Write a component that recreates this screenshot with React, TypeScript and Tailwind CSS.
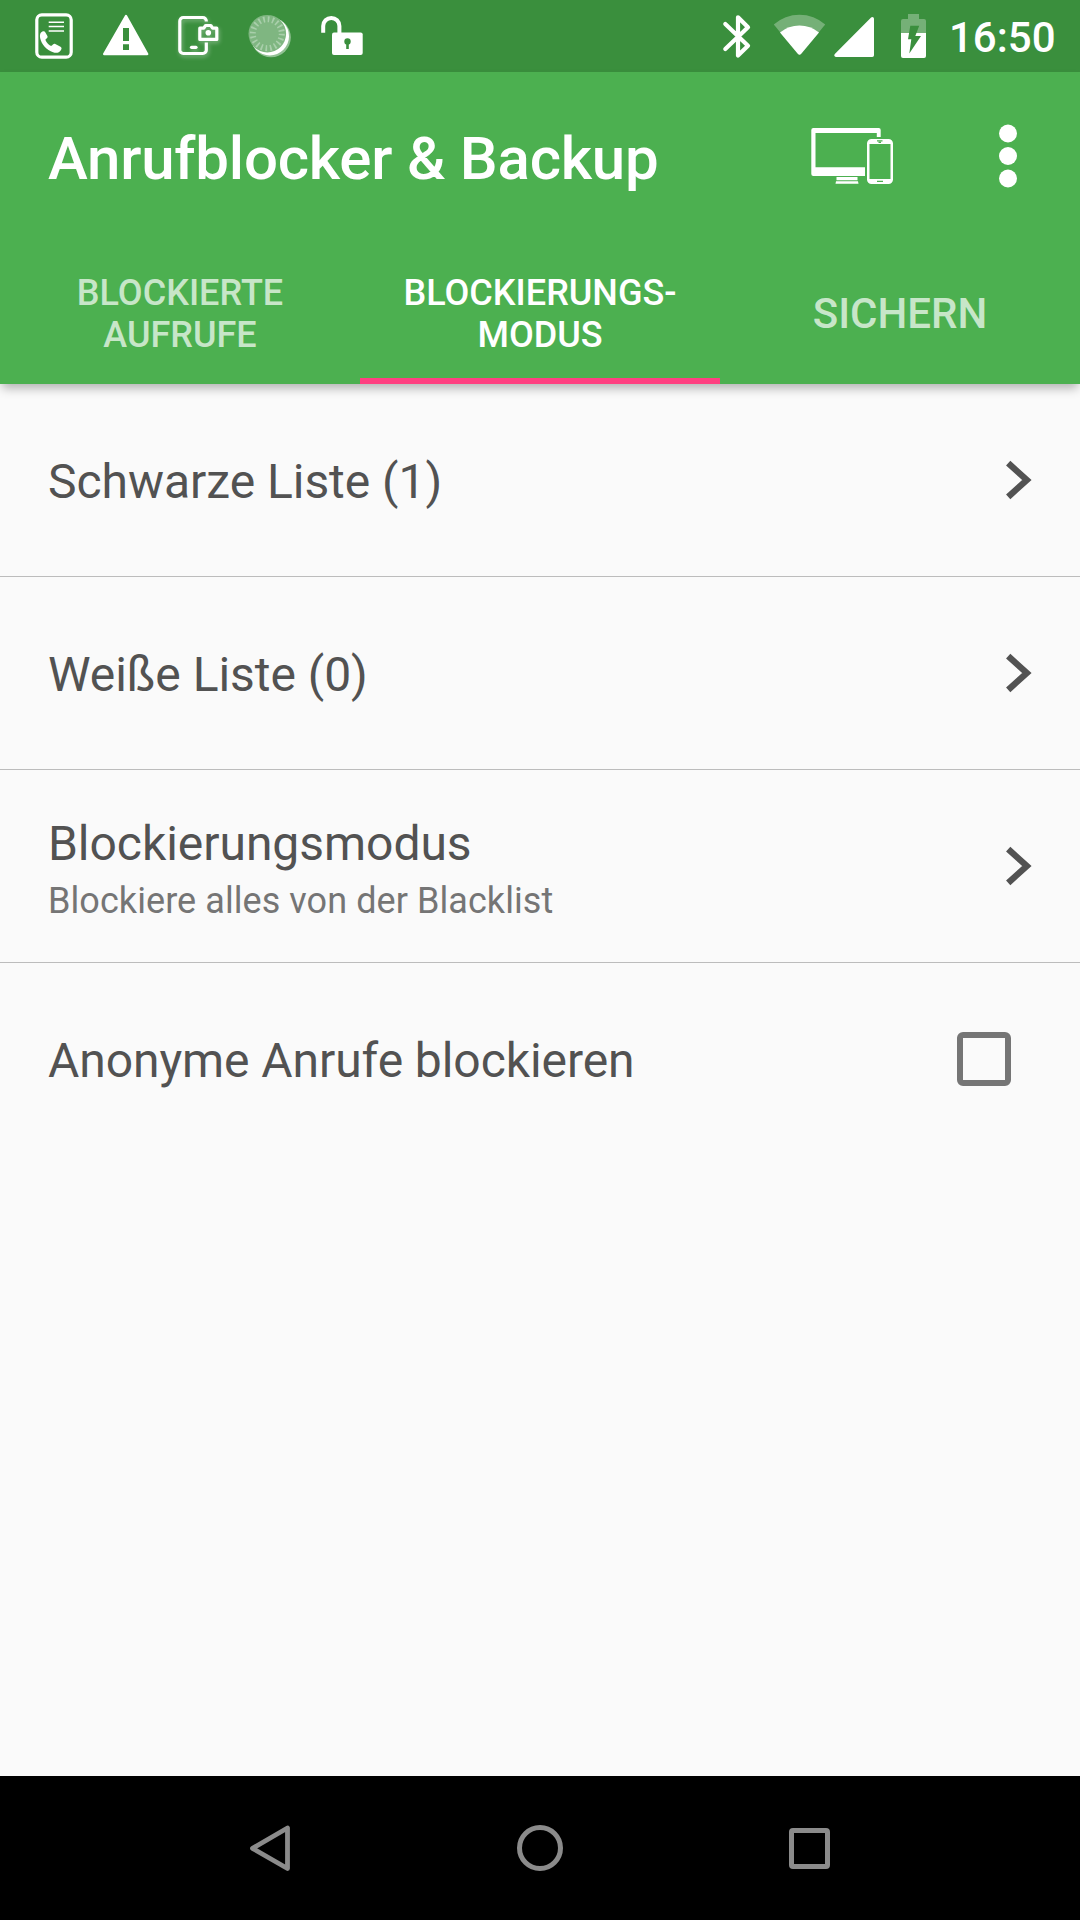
import React from "react";

type Tab = { lines: string[]; active?: boolean; large?: boolean };

const TABS: Tab[] = [
  { lines: ["BLOCKIERTE", "AUFRUFE"] },
  { lines: ["BLOCKIERUNGS-", "MODUS"], active: true },
  { lines: ["SICHERN"], large: true },
];

const ROWS = [
  { title: "Schwarze Liste (1)" },
  { title: "Weiße Liste (0)" },
  { title: "Blockierungsmodus", subtitle: "Blockiere alles von der Blacklist" },
];

const CallLogIcon = () => (
  <svg className="h-[72px] w-[72px]" viewBox="0 0 72 72" fill="none">
    <rect x="18.8" y="14.8" width="34.4" height="42.4" rx="5" stroke="#fff" strokeWidth="3.2" />
    <path d="M30.7 22.2H46M30.7 26.5H46M30.7 31H46" stroke="#fff" strokeWidth="1.5" />
    <path
      fill="#fff"
      d="M22.600 33c1.600-2 4-2.200 4.800-.6l2 3.500c.6 1.200-.2 2.200-1.600 3.200-.8.7.1 2.600 1.900 4.400s3.500 2.900 4.300 2.100c1.200-1.400 2-2.200 3.300-1.600l5.200 2.700c1.400.9 1.300 2 .5 3.200-1.700 2.700-4.600 3.500-7.900 2.300C28.500 50 23.500 44.600 22.200 38.300c-.4-2-.4-3.900.4-5.300z"
    />
  </svg>
);

const WarningIcon = () => (
  <svg className="h-[72px] w-[72px]" viewBox="0 0 72 72" fill="#fff">
    <path d="M36 16 57.200 54H14.200z" stroke="#fff" strokeWidth="2.400" strokeLinejoin="round" />
    <path d="M33 28h6v13h-6zM33 44.300h6v5.700h-6z" fill="#3a8f3d" />
  </svg>
);

const ScreenshotIcon = () => (
  <svg
    className="h-[72px] w-[72px] drop-shadow-[1px_2px_2px_rgba(255,255,255,0.35)]"
    viewBox="0 0 72 72"
    fill="none"
    stroke="#fff"
    strokeWidth="3.2"
  >
    <path d="M44.300 21.500V21a3.500 3.500 0 0 0-3.500-3.500H21.300a3.500 3.500 0 0 0-3.500 3.500v29a3.500 3.500 0 0 0 3.500 3.500h19.500a3.500 3.500 0 0 0 3.500-3.500v-7.500" />
    <path d="M29.500 47.300h4.500" strokeLinecap="round" />
    <path d="M37.800 28.200h4l1.800-2.700h5.200l1.800 2.700h4.200v11.200h-17z" strokeLinejoin="round" />
    <circle cx="46.300" cy="32.800" r="2.800" fill="#fff" stroke="none" />
  </svg>
);

const SpinnerIcon = () => (
  <svg className="h-[72px] w-[72px]" viewBox="0 0 72 72" fill="none">
    <circle cx="37" cy="37.500" r="19.800" fill="#fff" opacity=".45" />
    <circle cx="35.800" cy="36.200" r="19.200" fill="#fff" />
    <circle cx="33.300" cy="33.700" r="18.800" fill="#7fb681" />
    <circle
      cx="33.300"
      cy="33.700"
      r="14.500"
      stroke="#a9cfab"
      strokeWidth="6"
      strokeDasharray="1.700 2.855"
    />
  </svg>
);

const UnlockIcon = () => (
  <svg className="h-[72px] w-[72px]" viewBox="0 0 72 72" fill="none">
    <path d="M17.200 32.700V26a8.100 8.100 0 0 1 16.200 0v8" stroke="#fff" strokeWidth="4" />
    <rect x="26" y="32.500" width="30.700" height="22.500" rx="2" fill="#fff" />
    <circle cx="41.500" cy="41.500" r="3.200" fill="#3a8f3d" />
    <path d="M41.500 41.500v7.500" stroke="#3a8f3d" strokeWidth="2.600" />
  </svg>
);

const BluetoothIcon = () => (
  <svg className="h-[72px] w-[68px]" viewBox="700 0 68 72" fill="none">
    <path
      d="M725.300 24 748 45.700 738 55.500V17.300L748 27.200 725.300 49"
      stroke="#fff"
      strokeWidth="4.200"
      strokeLinecap="round"
      strokeLinejoin="round"
    />
  </svg>
);

const WifiIcon = () => (
  <svg className="h-[72px] w-[61px]" viewBox="768 0 61 72" fill="#fff">
    <path d="M798 54 773.800 24.500A39 39 0 0 1 825.200 24.500L801 54q-1.500 1.600-3 0z" opacity=".3" />
    <path d="M798 54 780 32.400A31 31 0 0 1 819 32.400L801 54q-1.500 1.600-3 0z" />
  </svg>
);

const SignalIcon = () => (
  <svg className="h-[72px] w-[61px]" viewBox="829 0 61 72">
    <path d="M836 55.300H872.300V18.700z" fill="#fff" stroke="#fff" strokeWidth="3.400" strokeLinejoin="round" />
  </svg>
);

const BatteryIcon = () => (
  <svg className="h-[72px] w-[47px]" viewBox="890 0 47 72" fill="#fff">
    <path d="M908 14h11v5h5a2 2 0 0 1 2 2v12h-25V21a2 2 0 0 1 2-2h5z" opacity=".3" />
    <path d="M901 33h25v23a2 2 0 0 1-2 2h-21a2 2 0 0 1-2-2z" />
    <path d="M910.300 25.700h8.900L915.300 36h5.700l-11.700 17.500 2-14.200H908z" fill="#3a8f3d" />
  </svg>
);

const DevicesIcon = () => (
  <svg className="h-[60px] w-[84px]" viewBox="811 126 84 60" fill="#fff">
    <path
      fillRule="evenodd"
      d="M813.300 128h65.400a2 2 0 0 1 2 2v7h-3.900v-4h-61.300v34.300H865V176h-51.700a2 2 0 0 1-2-2v-44a2 2 0 0 1 2-2z"
    />
    <path d="M836.500 177h21v3.300h-21zM836 181.300h22l.5 2.500h-23z" />
    <path
      fillRule="evenodd"
      d="M871.500 139h17a4.500 4.500 0 0 1 4.500 4.500v36a4.500 4.500 0 0 1-4.500 4.500h-17a4.500 4.500 0 0 1-4.500-4.500v-36a4.500 4.500 0 0 1 4.500-4.500zM869.500 144v35h21v-35z"
    />
    <path d="M877 140.800h5.500M878.500 142.300h2.500M877 181.300h6" stroke="#4cb050" strokeWidth="1.300" />
  </svg>
);

const MoreIcon = () => (
  <svg className="h-[66px] w-[20px]" viewBox="998 123 20 66" fill="#fff">
    <circle cx="1008" cy="133.500" r="9" />
    <circle cx="1008" cy="156" r="9" />
    <circle cx="1008" cy="178.500" r="9" />
  </svg>
);

const ChevronIcon = () => (
  <svg className="h-[40px] w-[28px]" viewBox="0 0 28 40" fill="none">
    <path d="M4.200 3.200 22.800 20 4.200 36.800" stroke="#525252" strokeWidth="6.400" />
  </svg>
);

const StatusBar = () => (
  <div className="flex h-[72px] items-center bg-[#3a8f3d] pl-[18px]">
    <CallLogIcon />
    <WarningIcon />
    <ScreenshotIcon />
    <SpinnerIcon />
    <UnlockIcon />
    <div className="ml-auto flex items-center">
      <BluetoothIcon />
      <WifiIcon />
      <SignalIcon />
      <BatteryIcon />
      <span className="w-[143px] pt-[4px] pl-[12px] text-[42px] leading-[50px] font-medium">16:50</span>
    </div>
  </div>
);

const TabBar = () => (
  <div className="grid h-[144px] grid-cols-3">
    {TABS.map((tab) => (
      <div
        key={tab.lines[0]}
        className={`flex flex-col items-center justify-center border-b-[6px] pt-[10px] text-center font-medium ${
          tab.active ? "border-b-[#ff4081] text-white" : "border-b-transparent text-white/70"
        } ${tab.large ? "text-[42px] leading-[50px]" : "text-[36px] leading-[42px]"}`}
      >
        {tab.lines.map((line) => (
          <span key={line}>{line}</span>
        ))}
      </div>
    ))}
  </div>
);

const NavBar = () => (
  <nav className="grid h-[144px] grid-cols-3 items-center justify-items-center bg-black px-[135px]">
    <svg className="h-[54px] w-[54px]" viewBox="0 0 54 54" fill="none">
      <path d="M44.500 7v40.500L9.500 27.300z" stroke="#8b8b8b" strokeWidth="4.800" strokeLinejoin="round" />
    </svg>
    <span className="h-[46px] w-[46px] rounded-full border-[5px] border-[#8b8b8b]" />
    <span className="mr-px h-[41px] w-[41px] rounded-[4px] border-[5px] border-[#8b8b8b]" />
  </nav>
);

export default function App() {
  return (
    <div className="flex h-[1920px] w-[1080px] flex-col overflow-hidden bg-[#fafafa] font-['Roboto',sans-serif] text-white">
      <StatusBar />

      {/* App bar with tabs */}
      <header className="h-[312px] bg-[#4cb050] shadow-[0_6px_10px_-2px_rgba(0,0,0,0.3)]">
        <div className="flex h-[168px] items-center pl-12">
          <h1 className="flex-1 pt-[6px] text-[60px] leading-[70px] font-medium tracking-[-0.22px]">
            Anrufblocker &amp; Backup
          </h1>
          <div className="mr-[103px]">
            <DevicesIcon />
          </div>
          <div className="mr-[62px]">
            <MoreIcon />
          </div>
        </div>
        <TabBar />
      </header>

      {/* Blocking settings */}
      <main className="flex-1 text-[#525252]">
        {ROWS.map((row) => (
          <div
            key={row.title}
            className="flex h-[193px] items-center justify-between border-b border-[#bcbcbc] pr-[48px] pl-12"
          >
            <div className="flex flex-col pt-[3px]">
              <span className="text-[48px] leading-[57px] tracking-[-0.04px]">{row.title}</span>
              {row.subtitle && (
                <span className="mt-[6px] -mb-[3px] text-[36px] leading-[46px] tracking-[0.07px] text-[#757575]">
                  {row.subtitle}
                </span>
              )}
            </div>
            <ChevronIcon />
          </div>
        ))}
        <label className="flex h-[192px] items-center justify-between pr-[69px] pl-12">
          <span className="pt-[3px] text-[48px] leading-[57px] tracking-[-0.07px]">Anonyme Anrufe blockieren</span>
          <input
            type="checkbox"
            className="h-[54px] w-[54px] appearance-none rounded-[6px] border-[6px] border-[#757575]"
          />
        </label>
      </main>

      <NavBar />
    </div>
  );
}
